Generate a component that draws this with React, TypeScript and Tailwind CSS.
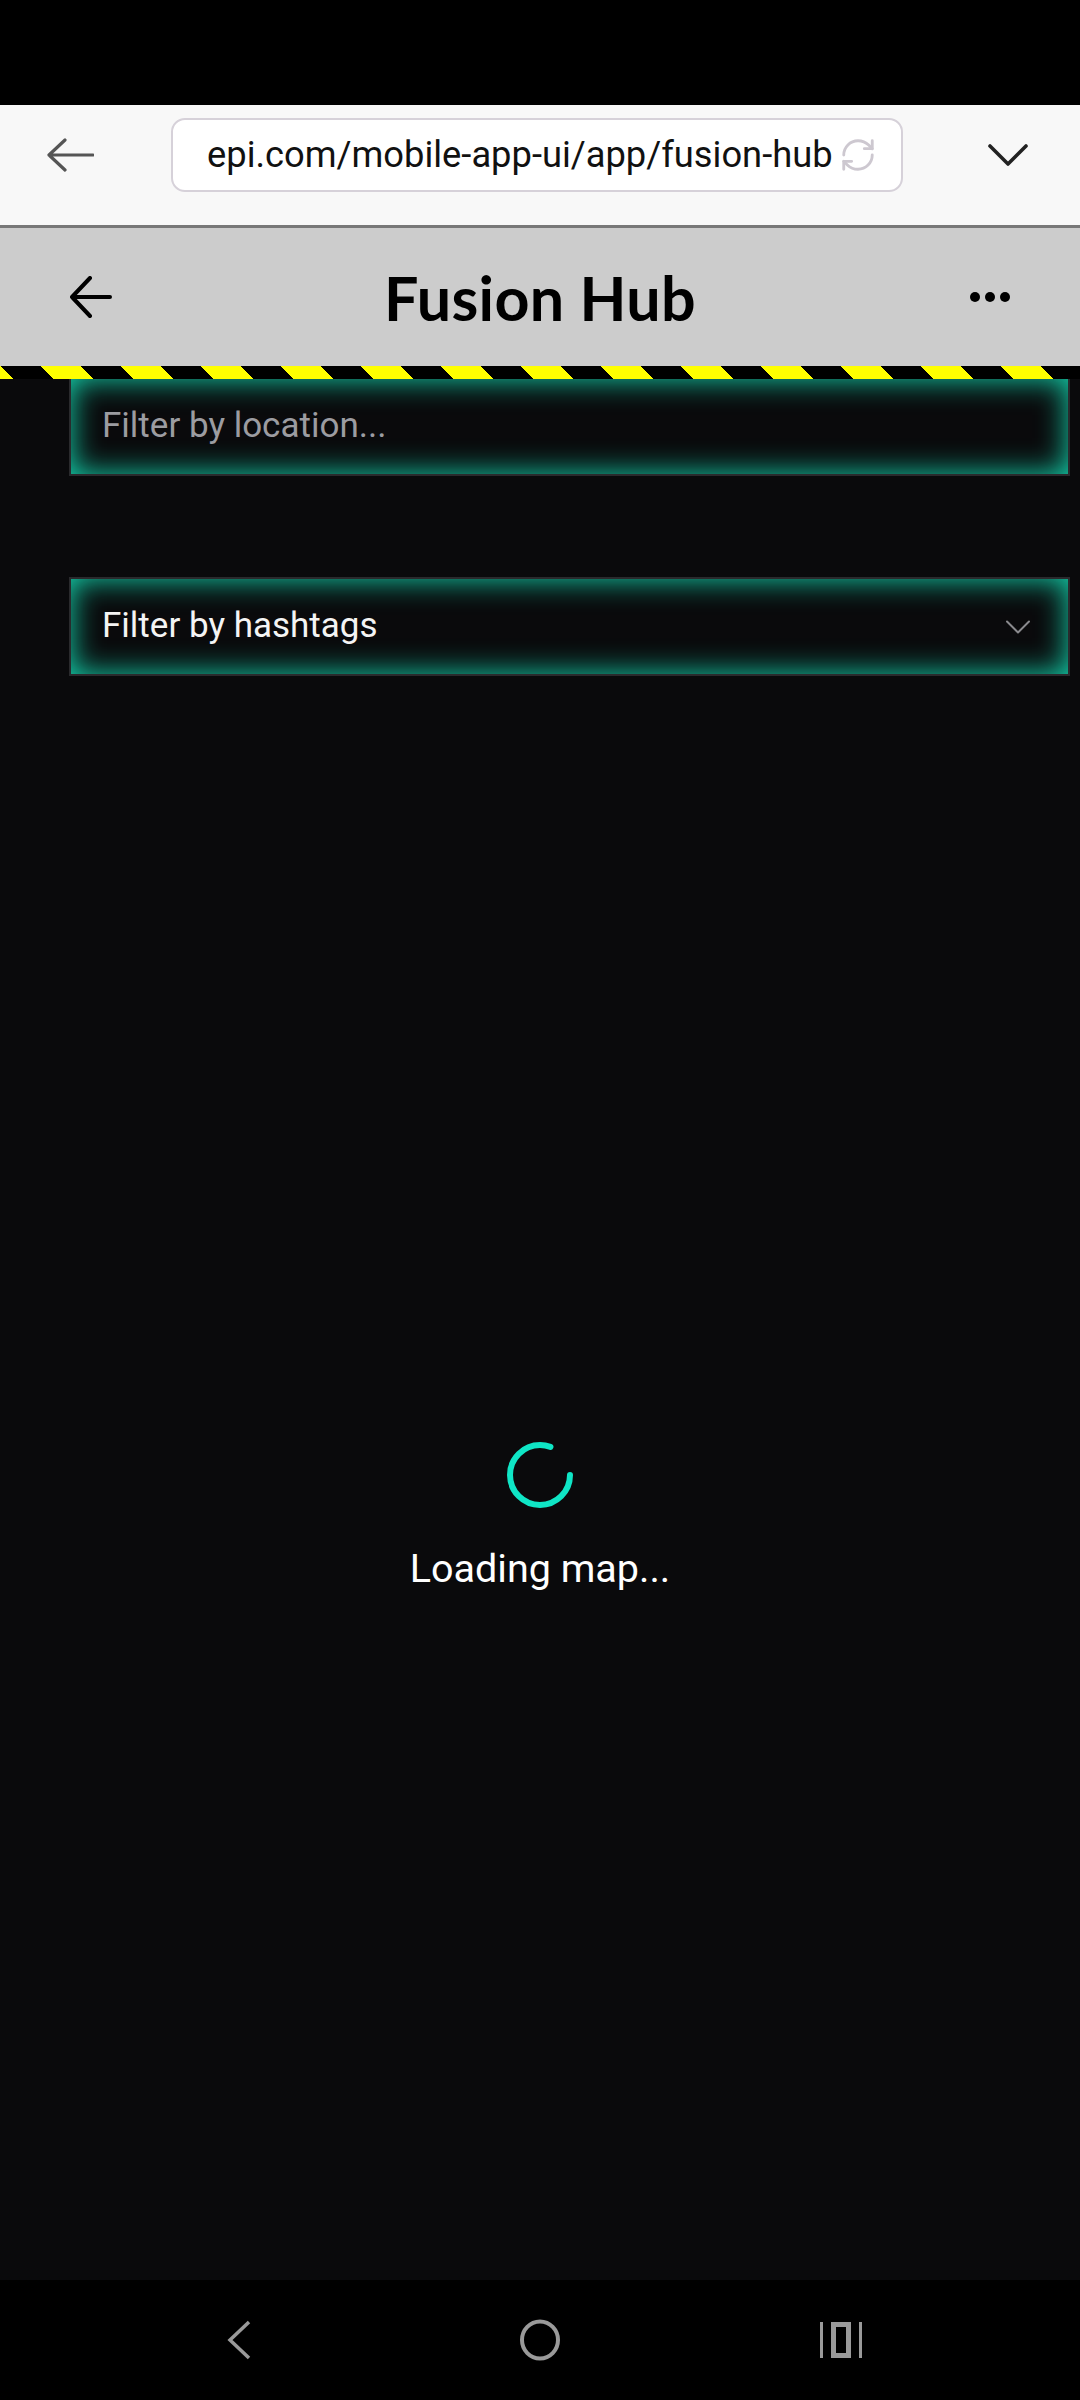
import { RefreshCw } from "lucide-react";

const roboto = "font-['Roboto','Liberation_Sans',sans-serif]";

const BrowserBar = () => (
  <div className="flex h-[123px] items-center border-b-[3px] border-[#787878] bg-[#f8f8f8] pb-[20px]">
    <div className="flex w-[171px] items-center pl-[46px]">
      <svg width="48" height="34" viewBox="0 0 48 34" fill="none" stroke="#555" strokeWidth="3.2" strokeLinecap="round" strokeLinejoin="round">
        <path d="M47 17H3M19 2 3 17l16 15" />
      </svg>
    </div>
    <div className="flex h-[74px] w-[732px] items-center rounded-[14px] border-2 border-[#d6d1d9] bg-white pl-[34px] pr-[24px]">
      <span className={`${roboto} flex-1 text-[36.3px] leading-none text-[#111] whitespace-nowrap`}>
        epi.com/mobile-app-ui/app/fusion-hub
      </span>
      <RefreshCw size={38} strokeWidth={1.8} color="#cdc8d0" />
    </div>
    <div className="flex flex-1 pl-[85px]">
      <svg width="40" height="22" viewBox="0 0 40 22" fill="none" stroke="#222" strokeWidth="3.6" strokeLinecap="round" strokeLinejoin="round">
        <path d="M2 2l18 18L38 2" />
      </svg>
    </div>
  </div>
);

const AppHeader = () => (
  <div className="flex h-[138px] items-center bg-[#cccccc] px-[70px]">
    <svg width="42" height="42" viewBox="0 0 42 42" fill="none" stroke="#000" strokeWidth="4" strokeLinecap="round" strokeLinejoin="round">
      <path d="M40 21H2M20 2 2 21l18 19" />
    </svg>
    <h1 className="flex-1 text-center font-['Lato',sans-serif] text-[61px] font-bold leading-none tracking-[0.3px] text-black">
      Fusion Hub
    </h1>
    <div className="flex w-[42px] items-center justify-end gap-[5px]">
      <span className="h-[10px] w-[10px] rounded-full bg-black" />
      <span className="h-[10px] w-[10px] rounded-full bg-black" />
      <span className="h-[10px] w-[10px] rounded-full bg-black" />
    </div>
  </div>
);

const glowBox =
  "ml-[69px] mr-[10px] flex items-center border-2 border-[#2a2a2d] bg-[#0a0a0c] shadow-[inset_0_0_30px_#14dcb4]";

export default function App() {
  return (
    <div className="flex h-[2400px] w-[1080px] flex-col overflow-hidden bg-[#0a0a0c]">
      <div className="h-[105px] bg-black" />
      <BrowserBar />
      <AppHeader />
      <div className="h-[13px] bg-[repeating-linear-gradient(45deg,#ff0_0_9.2px,#000_9.2px_37.5px,#ff0_37.5px_56.57px)]" />

      <main className="flex flex-1 flex-col">
        <div className={`${glowBox} h-[97px] border-t-0 pl-[31px]`}>
          <input
            placeholder="Filter by location..."
            className={`${roboto} w-full bg-transparent text-[35px] text-white outline-none placeholder:text-[#9c9ca1]`}
          />
        </div>

        <div className={`${glowBox} mt-[101px] h-[99px] pl-[31px] pr-[38px]`}>
          <span className={`${roboto} flex-1 text-[35px] text-[#f4f4f4]`}>Filter by hashtags</span>
          <svg width="24" height="14" viewBox="0 0 24 14" fill="none" stroke="#8a8a8e" strokeWidth="2" strokeLinecap="round" strokeLinejoin="round">
            <path d="M1 1.5l11 11 11-11" />
          </svg>
        </div>

        <div className="flex flex-1 flex-col items-center pt-[766px]">
          <svg width="66" height="66" viewBox="0 0 66 66" fill="none">
            <circle cx="33" cy="33" r="30" stroke="#0fe6c6" strokeWidth="6" strokeLinecap="round" strokeDasharray="151.8 188.5" />
          </svg>
          <p className={`${roboto} mt-[31px] text-[39.5px] leading-[1.5] text-white`}>Loading map...</p>
        </div>
      </main>

      <nav className="flex h-[120px] items-center bg-black pl-[226px]">
        <svg width="26" height="40" viewBox="0 0 26 40" fill="none" stroke="#9a9a9a" strokeWidth="3.5">
          <path d="M23 2 4 20l19 18" />
        </svg>
        <svg className="ml-[267px]" width="42" height="42" viewBox="0 0 42 42" fill="none" stroke="#9a9a9a" strokeWidth="4">
          <ellipse cx="21" cy="21" rx="18" ry="18.5" />
        </svg>
        <svg className="ml-[259px]" width="42" height="38" viewBox="0 0 42 38" fill="none">
          <rect x="0" y="1" width="3" height="36" fill="#9a9a9a" />
          <rect x="13.5" y="3.5" width="15" height="31" stroke="#9a9a9a" strokeWidth="5" />
          <rect x="39" y="1" width="3" height="36" fill="#9a9a9a" />
        </svg>
      </nav>
    </div>
  );
}
